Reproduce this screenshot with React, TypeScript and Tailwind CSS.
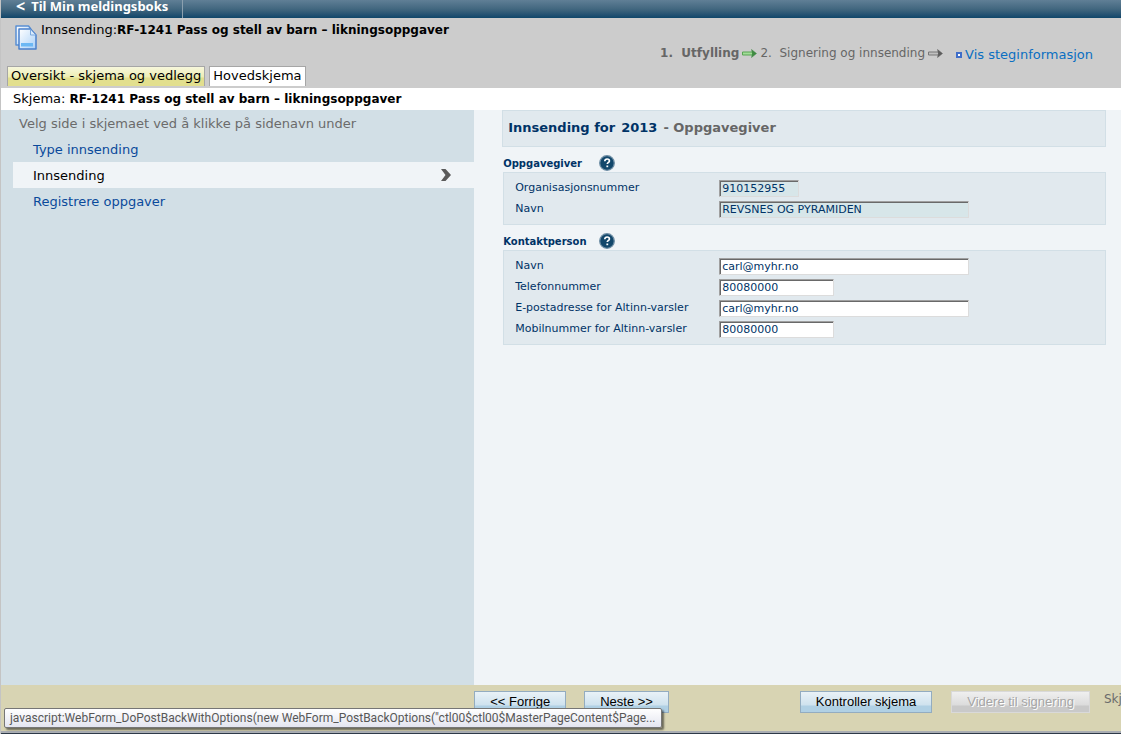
import clsx from 'clsx';

type Field = {
    id: string;
    label: string;
    value: string;
    short?: boolean;
    readOnly?: boolean;
};

const OPPGAVEGIVER: Field[] = [
    { id: 'orgnr', label: 'Organisasjonsnummer', value: '910152955', short: true, readOnly: true },
    { id: 'orgnavn', label: 'Navn', value: 'REVSNES OG PYRAMIDEN', readOnly: true },
];

const KONTAKTPERSON: Field[] = [
    { id: 'navn', label: 'Navn', value: 'carl@myhr.no' },
    { id: 'telefon', label: 'Telefonnummer', value: '80080000', short: true },
    { id: 'epost', label: 'E-postadresse for Altinn-varsler', value: 'carl@myhr.no' },
    { id: 'mobil', label: 'Mobilnummer for Altinn-varsler', value: '80080000', short: true },
];

const PAGES = [
    { name: 'Type innsending', active: false },
    { name: 'Innsending', active: true },
    { name: 'Registrere oppgaver', active: false },
];

function DocumentsIcon() {
    return (
        <svg width="22" height="25" viewBox="0 0 22 25" className="shrink-0" aria-hidden="true">
            <defs>
                <linearGradient id="sheet" x1="0" y1="0" x2="1" y2="1">
                    <stop offset="0" stopColor="#ffffff" />
                    <stop offset="1" stopColor="#a9d0f7" />
                </linearGradient>
            </defs>
            <path d="M1 1h12.500l2 2.500V20H1z" fill="url(#sheet)" stroke="#5a8fd2" strokeWidth="1.500" strokeLinejoin="round" />
            <path d="M4 4h11.500l5.500 6v14H4z" fill="url(#sheet)" stroke="#4a80cb" strokeWidth="1.500" strokeLinejoin="round" />
            <path d="M15.500 4.500V10h5" fill="#d9ebfc" stroke="#7aa9e0" />
            <path d="M6 18h12v3.500H6z" fill="#6cb8f4" />
        </svg>
    );
}

function StepArrow({ green }: { green?: boolean }) {
    return (
        <svg width="15" height="9" viewBox="0 0 15 9" className="shrink-0" aria-hidden="true">
            <path d="M.5 3h10v3H.5z" fill={green ? '#a2dc98' : '#c0c0c0'} stroke={green ? '#57a552' : '#777777'} />
            <path d="M9.500 0.500L14.500 4.500 9.500 8.500l1-4z" fill={green ? '#3f8a43' : '#5d5d5d'} stroke={green ? '#3f8a43' : '#5d5d5d'} strokeWidth=".5" />
        </svg>
    );
}

function HelpButton({ label }: { label: string }) {
    return (
        <button type="button" aria-label={label} className="cursor-pointer">
            <svg width="16" height="16" viewBox="0 0 16 16" className="block" aria-hidden="true">
                <circle cx="8" cy="8" r="7.300" fill="#12476b" stroke="#6f8ea5" strokeWidth="1.300" />
                <path d="M5.800 6.200c0-1.500 1-2.200 2.300-2.200s2.300.7 2.300 1.900c0 1.500-2.100 1.600-2.100 3.200" fill="none" stroke="#fff" strokeWidth="1.700" />
                <path d="M7.400 10.500h1.800v1.700H7.400z" fill="#fff" />
            </svg>
        </button>
    );
}

function FormSection({ title, fields }: { title: string; fields: Field[] }) {
    return (
        <section className="mb-2 ml-px">
            <div className="flex h-[17px] items-start gap-4">
                <h3 className="w-20 whitespace-nowrap text-[10px] leading-[18px] font-bold text-[#003366]">{title}</h3>
                <HelpButton label={`Hjelp til ${title}`} />
            </div>
            <div className="border border-[#d2dfe6] bg-[#e1e9ee] pt-[7px] pb-0.5 pl-[11px]">
                {fields.map(f => (
                    <div key={f.id} className="flex h-[21px] items-start">
                        <label htmlFor={f.id} className="w-[204px] shrink-0 text-[11px] leading-4 text-[#003366]">{f.label}</label>
                        <input
                            id={f.id}
                            type="text"
                            defaultValue={f.value}
                            readOnly={f.readOnly}
                            className={clsx(
                                'h-[17px] border border-t-[#a0a0a0] border-r-[#dcdcdc] border-b-[#dcdcdc] border-l-[#a0a0a0] px-0.5 text-[11px] leading-3 text-[#003366] shadow-[inset_1px_1px_0_#696969] outline-none',
                                f.readOnly ? 'bg-[#d7e6e9]' : 'bg-white',
                                f.short ? (f.readOnly ? 'w-20' : 'w-[115px]') : 'w-[250px]'
                            )}
                        />
                    </div>
                ))}
            </div>
        </section>
    );
}

function FooterButton({ children, disabled }: { children: string; disabled?: boolean }) {
    return (
        <button
            type="button"
            disabled={disabled}
            className={clsx(
                'h-[22px] shrink-0 whitespace-nowrap border px-[15px] font-["Liberation_Sans",sans-serif] text-[13px] leading-5',
                disabled
                    ? 'border-[#d9d9d9] bg-linear-to-b from-[#efefef] from-0% via-[#dcdcdc] via-65% to-[#c9c9c9] to-70% text-[#a5a5a5] [text-shadow:1px_1px_0_#fff]'
                    : 'border-[#93acc0] bg-linear-to-b from-[#e9f2f7] from-0% via-[#cfe2ee] via-65% to-[#b0d0e4] to-70% text-black'
            )}
        >
            {children}
        </button>
    );
}

export default function App() {
    return (
        <div className='flex min-h-screen flex-col overflow-hidden border-l border-[#c4c4c4] bg-[#cccccc] font-["DejaVu_Sans",Verdana,sans-serif] text-[13px] text-black'>
            {/* Top bar */}
            <nav className="flex h-[18px] items-start bg-linear-to-b from-[#607f96] via-[#42677f] to-[#0e466a]">
                <a href="#meldingsboks" className='flex h-full gap-1.5 border-r border-[#8ba0af] pr-3.5 pl-[15px] font-["Noto_Sans",sans-serif] font-bold leading-3 text-white'>
                    <span className="text-base leading-3">&lt;</span>
                    <span>Til Min meldingsboks</span>
                </a>
            </nav>

            <header className="flex h-[70px] justify-between">
                <div className="flex flex-col justify-between">
                    <div className="flex gap-1 pt-[7px] pl-3.5">
                        <DocumentsIcon />
                        <h1 className="h-3 whitespace-nowrap leading-[10px]">Innsending:<b className="text-xs leading-[10px]">RF-1241 Pass og stell av barn – likningsoppgaver</b></h1>
                    </div>
                    <div className="mb-0.5 ml-1.5 flex items-end gap-1">
                        <a href="#oversikt" className="h-5 whitespace-nowrap border border-b-0 border-[#a6a6a6] bg-linear-to-b from-[#f7f7dc] from-0% via-[#eeeeb5] via-50% to-[#e2df8e] to-60% px-[3px] leading-[18px]">Oversikt - skjema og vedlegg</a>
                        <a href="#hovedskjema" className="h-5 whitespace-nowrap border border-b-0 border-[#a6a6a6] bg-white px-[3px] leading-[18px]">Hovedskjema</a>
                    </div>
                </div>
                <div className="mt-[27px] flex h-4 shrink-0 items-center gap-[3px] whitespace-nowrap pr-7 text-xs text-[#666666]">
                    <b>1.&nbsp; Utfylling</b>
                    <StepArrow green />
                    <span>2.&nbsp; Signering og innsending</span>
                    <StepArrow />
                    <a href="#steg" className="ml-2.5 flex items-center gap-[3px] pt-1 text-[13px] text-[#0a6fc2]">
                        <span className="size-1.5 border-2 border-[#3f6ec9] bg-white" />
                        Vis steginformasjon
                    </a>
                </div>
            </header>

            <h2 className="h-[22px] whitespace-nowrap bg-white pl-3 leading-[22px]">Skjema: <b className="text-xs">RF-1241 Pass og stell av barn – likningsoppgaver</b></h2>

            <main className="flex flex-1 bg-[#f0f4f7]">
                <aside className="w-[42.25%] shrink-0 bg-[#d2dfe6] pl-3">
                    <p className="h-[26px] pl-1.5 leading-7 text-[#6b6b6b]">Velg side i skjemaet ved å klikke på sidenavn under</p>
                    <ul>
                        {PAGES.map(p => (
                            <li key={p.name}>
                                <a
                                    href="#side"
                                    className={clsx(
                                        'flex h-[26px] items-center justify-between pr-[23px] pl-5 leading-7',
                                        p.active ? 'bg-[#f0f4f7] text-black' : 'text-[#0a4a9b]'
                                    )}
                                >
                                    <span className="pt-0.5">{p.name}</span>
                                    {p.active && (
                                        <svg width="10" height="12" viewBox="0 0 10 12" aria-hidden="true">
                                            <path d="M0 0h4.500L10 6l-5.500 6H0l4.500-6z" fill="#5a5a5a" />
                                        </svg>
                                    )}
                                </a>
                            </li>
                        ))}
                    </ul>
                </aside>

                <form className="min-w-0 flex-1 pr-[15px] pl-7">
                    <h2 className="mb-2 flex h-[37px] gap-1.5 border border-[#d2dfe6] bg-[#e1e9ee] pl-[5px] leading-[34px] font-bold text-[#666666]">
                        <span className="text-[#003366]">Innsending for</span>
                        <span className="text-[#003366]">2013</span>
                        <span>- Oppgavegiver</span>
                    </h2>
                    <FormSection title="Oppgavegiver" fields={OPPGAVEGIVER} />
                    <FormSection title="Kontaktperson" fields={KONTAKTPERSON} />
                </form>
            </main>

            <footer className="relative flex h-[49px] items-start border-b border-[#2d3947] bg-[#d8d4b3] pt-1.5 pl-[42.25%] shadow-[inset_0_-2px_0_#a9adb3]">
                <div className="flex gap-[18px]">
                    <FooterButton>&lt;&lt; Forrige</FooterButton>
                    <FooterButton>Neste &gt;&gt;</FooterButton>
                </div>
                <div className="ml-auto flex gap-[19px]">
                    <FooterButton>Kontroller skjema</FooterButton>
                    <FooterButton disabled>Videre til signering</FooterButton>
                </div>
                <span className="ml-3.5 w-[17px] shrink-0 overflow-hidden text-xs text-[#6b6b6b]">Skj</span>

                {/* Link target tooltip */}
                <div
                    role="tooltip"
                    className="absolute bottom-[5px] left-[3px] h-5 whitespace-nowrap rounded-xs border border-[#767676] bg-linear-to-b from-white to-[#e4e5f0] px-[5px] font-[Roboto,sans-serif] text-xs leading-[18px] text-[#575757] shadow-[2px_2px_2px_rgba(0,0,0,0.5)]"
                >
                    javascript:WebForm_DoPostBackWithOptions(new WebForm_PostBackOptions("ctl00$ctl00$MasterPageContent$Page...
                </div>
            </footer>
        </div>
    );
}
